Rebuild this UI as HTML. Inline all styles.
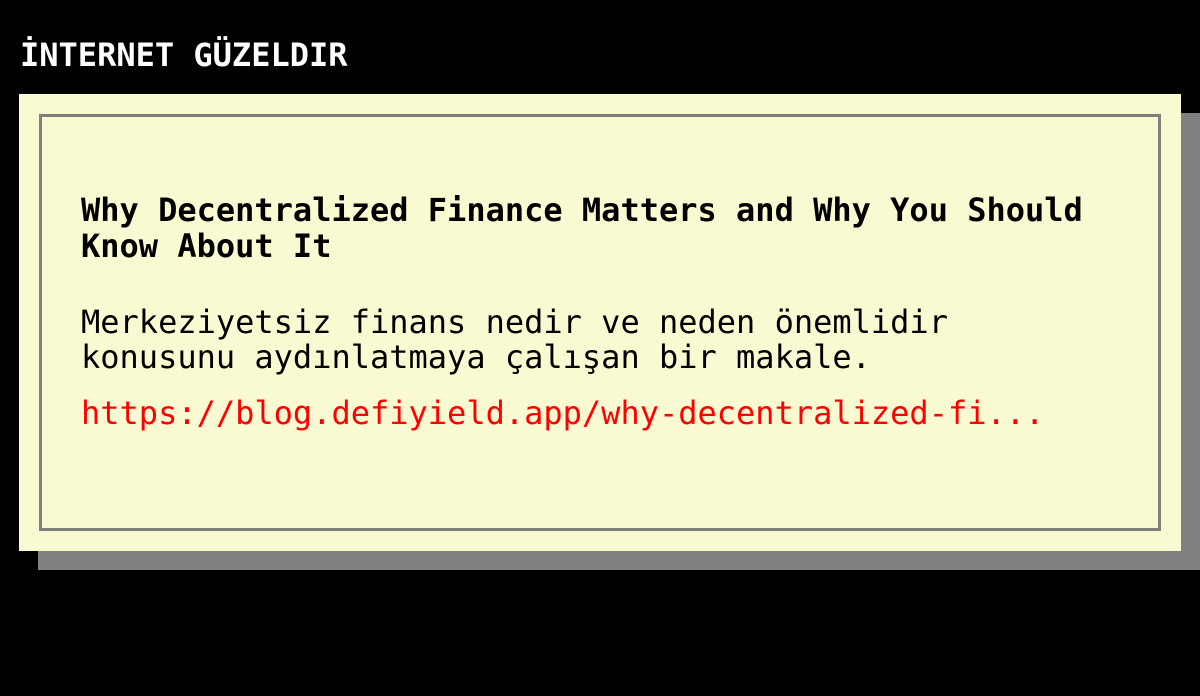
<!DOCTYPE html>
<html><head><meta charset="utf-8"><style>
html,body{margin:0;padding:0;background:#000;width:1200px;height:696px;overflow:hidden;font-family:"DejaVu Sans Mono","Liberation Mono",monospace;font-size:32px;}
.h{position:absolute;left:20px;top:37px;line-height:36px;color:#fff;font-weight:bold;}
.sh{position:absolute;left:38px;top:113px;width:1162px;height:457px;background:#808080;}
.card{position:absolute;left:19px;top:94px;width:1162px;height:457px;background:#fafad2;}
.in{position:absolute;left:20px;top:20px;width:1116px;height:411px;border:3px solid #808080;}
.t{position:absolute;left:39px;top:75px;line-height:36px;font-weight:bold;color:#000;white-space:pre;}
.d{position:absolute;left:39px;top:188px;line-height:35px;color:#000;white-space:pre;}
.l{position:absolute;left:39px;top:278px;line-height:36px;color:#f00;white-space:pre;}
</style></head><body>
<div class="h">İNTERNET GÜZELDIR</div>
<div class="sh"></div>
<div class="card"><div class="in">
<div class="t">Why Decentralized Finance Matters and Why You Should
Know About It</div>
<div class="d">Merkeziyetsiz finans nedir ve neden önemlidir
konusunu aydınlatmaya çalışan bir makale.</div>
<div class="l">https://blog.defiyield.app/why-decentralized-fi...</div>
</div></div>
</body></html>
